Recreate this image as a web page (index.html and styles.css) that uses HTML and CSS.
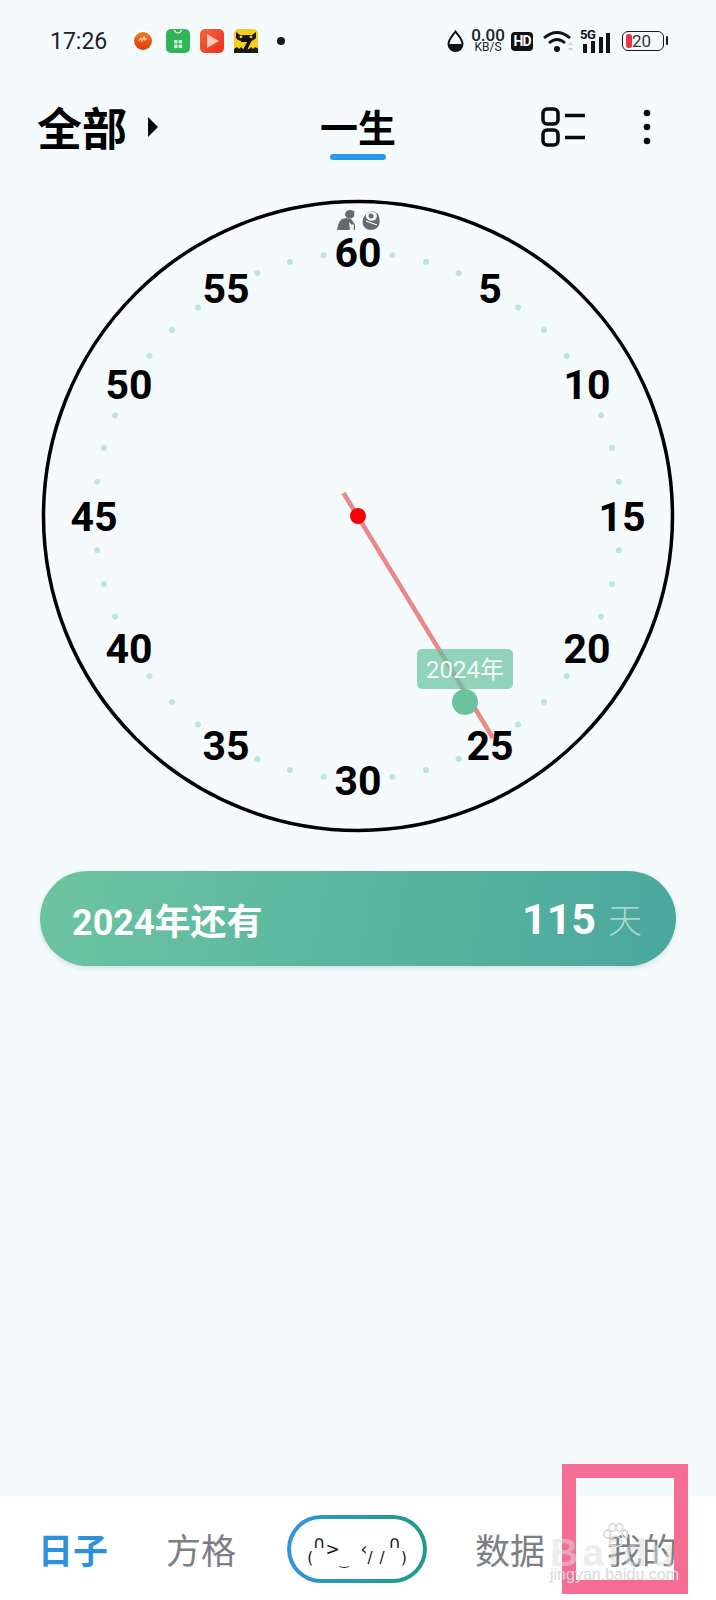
FILE: index.html
```html
<!DOCTYPE html>
<html lang="zh">
<head>
<meta charset="utf-8">
<title>一生</title>
<link rel="stylesheet" href="styles.css">
</head>
<body>
<div class="page">
  <div class="status">
    <span class="time">17:26</span>
    <div class="apps">
      <svg class="app-round" viewBox="0 0 24 24"><defs><linearGradient id="ga" x1="0" y1="0" x2="0" y2="1"><stop offset="0" stop-color="#f07a1c"/><stop offset="1" stop-color="#e5350f"/></linearGradient></defs><circle cx="12" cy="12" r="12" fill="#fff"/><circle cx="12" cy="12" r="9" fill="url(#ga)"/><path d="M8 12l2-3 1 3 2-4 1 3 2-2" fill="none" stroke="#ffd9b0" stroke-width="1.200"/></svg>
      <svg class="app" viewBox="0 0 24 24"><rect width="24" height="24" rx="5" fill="#2fb458"/><path d="M8 1q4 6 8 0" fill="none" stroke="#fff" stroke-width="1.200"/><g fill="#cfeeda"><rect x="8" y="11" width="3.600" height="3.600" rx="1"/><rect x="12.600" y="11" width="3.600" height="3.600" rx="1"/><rect x="8" y="15.600" width="3.600" height="3.600" rx="1"/><rect x="12.600" y="15.600" width="3.600" height="3.600" rx="1"/></g></svg>
      <svg class="app" viewBox="0 0 24 24"><defs><linearGradient id="gb" x1="0" y1="0" x2="1" y2="1"><stop offset="0" stop-color="#f2683c"/><stop offset="1" stop-color="#ee2d1e"/></linearGradient></defs><rect width="24" height="24" rx="5" fill="url(#gb)"/><path d="M7 5l12 7-12 7z" fill="#ffc9b8"/></svg>
      <svg class="app" viewBox="0 0 24 24"><rect width="24" height="24" rx="5" fill="#f7cc1c"/><path d="M2 3l4 3h12l4-3v6q-3 3-5 3H7q-3 0-5-3z" fill="#1b1b1b"/><circle cx="7" cy="8" r="1.400" fill="#f7cc1c"/><circle cx="17" cy="8" r="1.400" fill="#f7cc1c"/><path d="M7 9h12l-6 12h-4l4-8H7z" fill="#111"/><path d="M0 24v-4l3-2 2 2 2-2 2 2h6l2-2 2 2 2-2 4 2v4z" fill="#1b1b1b"/></svg>
      <span class="dot"></span>
    </div>
    <div class="sys">
      <svg class="drop" viewBox="0 0 17 23"><path d="M8.500 1.500C5 6.500 1.500 9.500 1.500 14a7 7 0 0 0 14 0C15.500 9.500 12 6.500 8.500 1.500z" fill="none" stroke="#111" stroke-width="2"/><path d="M1.500 14h14a7 7 0 0 1-14 0z" fill="#111"/></svg>
      <div class="net"><span class="net-v">0.00</span><span class="net-u">KB/S</span></div>
      <span class="hd">HD</span>
      <svg class="wifi" viewBox="0 0 30 23"><g fill="none" stroke="#111" stroke-width="2.800"><path d="M1 8q13-11 26 0"/><path d="M6 13q8-7 16 0"/></g><circle cx="14" cy="19" r="3" fill="#111"/><path d="M25 15l2.500-3 2.500 3zM25 18l2.500 3 2.500-3z" fill="#c9cccd"/></svg>
      <div class="sig">
        <span class="sig-5g">5G</span>
        <svg class="bars" viewBox="0 0 29 20"><g fill="#111"><rect x="2" y="11" width="4" height="9"/><rect x="10" y="8" width="4" height="12"/><rect x="18" y="4" width="4" height="16"/><rect x="25" y="0" width="4" height="20"/></g></svg>
      </div>
      <div class="batt"><span class="batt-fill"></span><span class="batt-num">20</span><span class="batt-nub"></span></div>
    </div>
  </div>

  <header class="head">
    <div class="scope"><span class="scope-t">全部</span><span class="tri"></span></div>
    <div class="tab"><span class="tab-t">一生</span><span class="tab-u"></span></div>
    <div class="tools">
      <svg class="grid-i" viewBox="0 0 44 40"><g fill="none" stroke="#0a0a0a" stroke-width="3.500"><rect x="2" y="2" width="15" height="15" rx="4"/><rect x="2" y="23" width="15" height="15" rx="4"/><path d="M24 8.500h20M24 30.500h20"/></g></svg>
      <svg class="more-i" viewBox="0 0 8 36"><g fill="#0a0a0a"><circle cx="4" cy="4" r="3.300"/><circle cx="4" cy="18" r="3.300"/><circle cx="4" cy="32" r="3.300"/></g></svg>
    </div>
  </header>

  <svg class="clock" viewBox="0 165 716 690">
    <circle cx="358" cy="516" r="314.500" fill="none" stroke="#000" stroke-width="3.500"/>
    <g class="ticks">
      <circle cx="358" cy="253" r="3" transform="rotate(7.500 358 516)"/>
      <circle cx="358" cy="253" r="3" transform="rotate(15 358 516)"/>
      <circle cx="358" cy="253" r="3" transform="rotate(22.500 358 516)"/>
      <circle cx="358" cy="253" r="3" transform="rotate(37.500 358 516)"/>
      <circle cx="358" cy="253" r="3" transform="rotate(45 358 516)"/>
      <circle cx="358" cy="253" r="3" transform="rotate(52.500 358 516)"/>
      <circle cx="358" cy="253" r="3" transform="rotate(67.500 358 516)"/>
      <circle cx="358" cy="253" r="3" transform="rotate(75 358 516)"/>
      <circle cx="358" cy="253" r="3" transform="rotate(82.500 358 516)"/>
      <circle cx="358" cy="253" r="3" transform="rotate(97.500 358 516)"/>
      <circle cx="358" cy="253" r="3" transform="rotate(105 358 516)"/>
      <circle cx="358" cy="253" r="3" transform="rotate(112.500 358 516)"/>
      <circle cx="358" cy="253" r="3" transform="rotate(127.500 358 516)"/>
      <circle cx="358" cy="253" r="3" transform="rotate(135 358 516)"/>
      <circle cx="358" cy="253" r="3" transform="rotate(142.500 358 516)"/>
      <circle cx="358" cy="253" r="3" transform="rotate(157.500 358 516)"/>
      <circle cx="358" cy="253" r="3" transform="rotate(165 358 516)"/>
      <circle cx="358" cy="253" r="3" transform="rotate(172.500 358 516)"/>
      <circle cx="358" cy="253" r="3" transform="rotate(187.500 358 516)"/>
      <circle cx="358" cy="253" r="3" transform="rotate(195 358 516)"/>
      <circle cx="358" cy="253" r="3" transform="rotate(202.500 358 516)"/>
      <circle cx="358" cy="253" r="3" transform="rotate(217.500 358 516)"/>
      <circle cx="358" cy="253" r="3" transform="rotate(225 358 516)"/>
      <circle cx="358" cy="253" r="3" transform="rotate(232.500 358 516)"/>
      <circle cx="358" cy="253" r="3" transform="rotate(247.500 358 516)"/>
      <circle cx="358" cy="253" r="3" transform="rotate(255 358 516)"/>
      <circle cx="358" cy="253" r="3" transform="rotate(262.500 358 516)"/>
      <circle cx="358" cy="253" r="3" transform="rotate(277.500 358 516)"/>
      <circle cx="358" cy="253" r="3" transform="rotate(285 358 516)"/>
      <circle cx="358" cy="253" r="3" transform="rotate(292.500 358 516)"/>
      <circle cx="358" cy="253" r="3" transform="rotate(307.500 358 516)"/>
      <circle cx="358" cy="253" r="3" transform="rotate(315 358 516)"/>
      <circle cx="358" cy="253" r="3" transform="rotate(322.500 358 516)"/>
      <circle cx="358" cy="253" r="3" transform="rotate(337.500 358 516)"/>
      <circle cx="358" cy="253" r="3" transform="rotate(345 358 516)"/>
      <circle cx="358" cy="253" r="3" transform="rotate(352.500 358 516)"/>
    </g>
    <g class="nums">
      <text x="358" y="267">60</text>
      <text x="490" y="303">5</text>
      <text x="587" y="399">10</text>
      <text x="622" y="531">15</text>
      <text x="587" y="663">20</text>
      <text x="490" y="760">25</text>
      <text x="358" y="795">30</text>
      <text x="226" y="760">35</text>
      <text x="129" y="663">40</text>
      <text x="94" y="531">45</text>
      <text x="129" y="399">50</text>
      <text x="226" y="303">55</text>
    </g>
    <g fill="#666a6c">
      <path d="M345 214q1-4 5-4 3 0 5 2l-1 1q1 4-2 5-2 1-4 0-3-1-3-4z"/>
      <path d="M337 230q1-8 5-11l4-1 5 1 3 4-2 2-3-3 1 8z"/>
      <path d="M353 223q2 0 2 2v5h-1.300v-5q0-1-1-1z"/>
      <path d="M365 215q7-7 13-1 4 9-1 14-6 4-12 0-5-6 0-13z"/>
      <path d="M366 214q5-4 10-1 2 4-1 7-5 2-8-1-2-2-1-5z" fill="#f5fbfd"/>
      <circle cx="371" cy="216" r="2.500"/>
      <path d="M366 221l11 4" fill="none" stroke="#f5fbfd" stroke-width="1.300"/>
    </g>
    <line class="hand" x1="343.500" y1="493" x2="493" y2="738"/>
    <circle cx="358" cy="516" r="8" fill="#fb0006"/>
    <rect class="tip" x="417" y="649" width="96" height="40" rx="5"/>
    <text class="tip-t" x="465" y="678">2024年</text>
    <circle cx="465" cy="702" r="13" fill="#6bc2a1"/>
  </svg>

  <div class="banner">
    <span class="banner-l">2024年还有</span>
    <span class="banner-r"><b class="days">115</b><span class="unit">天</span></span>
  </div>

  <nav class="tabs">
    <span class="nav nav-on">日子</span>
    <span class="nav nav-2">方格</span>
    <span class="pill"><span class="pill-in"><span class="lo">(</span><span class="hi">∩</span><span class="mid">&gt;</span><span class="under">‿</span><span class="mid gap">‹</span><span class="lo">/</span><span class="lo gap-s">/</span><span class="hi">∩</span><span class="lo">)</span></span></span>
    <span class="nav nav-3">数据</span>
    <span class="nav">我的</span>
  </nav>

  <div class="mark">
    <svg class="paw" viewBox="0 0 40 40"><g fill="none" stroke="#d6dadb" stroke-width="2.500"><ellipse cx="8" cy="17" rx="5" ry="6"/><ellipse cx="16" cy="7" rx="5" ry="6"/><ellipse cx="27" cy="7" rx="5" ry="6"/><ellipse cx="35" cy="17" rx="4" ry="6"/><path d="M12 34q-2-12 9-14 11 2 9 14-9 4-18 0z"/></g></svg>
    <span class="mark-b">Baidu</span>
    <span class="mark-u">jingyan.baidu.com</span>
  </div>
</div>
</body>
</html>
```

FILE: styles.css
```css
* { box-sizing: border-box; }
html, body { margin: 0; padding: 0; }
body { width: 716px; height: 1600px; overflow: hidden; background: #f5fbfd; font-family: Roboto, "Noto Sans CJK SC", sans-serif; color: #000; }
.page { position: relative; width: 716px; height: 1600px; display: flex; flex-direction: column; }

.status { height: 82px; display: flex; align-items: center; padding: 0 52px 0 50px; }
.time { font-size: 23px; color: #1c2226; width: 81px; }
.apps { display: flex; align-items: center; }
.app-round { width: 24px; height: 24px; margin-right: 11px; }
.app { width: 24px; height: 24px; margin-right: 10px; }
.dot { width: 8px; height: 8px; border-radius: 50%; background: #14191c; margin-left: 9px; }
.sys { margin-left: auto; display: flex; align-items: center; }
.drop { width: 17px; height: 23px; margin-right: 6px; }
.net { display: flex; flex-direction: column; align-items: center; width: 36px; color: #1c2226; }
.net-v { font-size: 17px; line-height: 13px; font-weight: 500; }
.net-u { font-size: 12px; line-height: 11px; }
.hd { width: 22px; height: 19px; margin-left: 5px; border-radius: 4px; background: #111; color: #fff; font: 700 14px/19px Roboto, sans-serif; text-align: center; letter-spacing: -1px; }
.wifi { width: 30px; height: 23px; margin-left: 10px; }
.sig { position: relative; width: 32px; height: 23px; margin-left: 7px; }
.sig-5g { position: absolute; left: 0; top: -1px; font-size: 13px; line-height: 12px; font-weight: 700; letter-spacing: -0.500px; color: #111; }
.bars { position: absolute; left: 1px; top: 3px; width: 29px; height: 20px; }
.batt { position: relative; width: 42px; height: 20px; margin-left: 10px; border: 1.500px solid #1a1a1a; border-radius: 6px; font-size: 17px; line-height: 17px; color: #333; display: flex; align-items: center; padding-left: 3px; }
.batt-fill { width: 6px; height: 14px; border-radius: 2.500px; background: #ee3346; }
.batt-nub { position: absolute; right: -5px; top: 4px; width: 2px; height: 9px; background: #1a1a1a; border-radius: 1px; }

.head { height: 83px; display: grid; grid-template-columns: 1fr auto 1fr; align-items: start; padding: 0 37px; }
.scope { display: flex; align-items: center; height: 90px; font-family: "Noto Sans CJK SC", sans-serif; }
.scope-t { font-size: 45px; font-weight: 700; line-height: 62px; }
.tri { width: 0; height: 0; margin-left: 21px; border-left: 10px solid #0a0a0a; border-top: 10px solid transparent; border-bottom: 10px solid transparent; }
.tab { display: flex; flex-direction: column; align-items: center; font-family: "Noto Sans CJK SC", sans-serif; }
.tab-t { font-size: 38px; font-weight: 700; line-height: 88px; height: 72px; }
.tab-u { width: 56px; height: 6px; border-radius: 3px; background: #2f97ea; }
.tools { display: flex; justify-content: flex-end; align-items: center; gap: 58px; height: 90px; padding-right: 28px; }
.grid-i { width: 44px; height: 40px; }
.more-i { width: 8px; height: 36px; }

.clock { display: block; width: 716px; flex: none; height: 690px; margin-bottom: 16px; }
.ticks circle { fill: #bfe4dd; }
.nums text { font-family: Roboto, sans-serif; font-weight: 700; font-size: 41px; text-anchor: middle; fill: #000; }
.hand { stroke: #e5504e; stroke-opacity: .68; stroke-width: 4.500; }
.tip { fill: #6bc2a1; fill-opacity: .72; }
.tip-t { font-family: Roboto, "Noto Sans CJK SC", sans-serif; font-size: 24px; text-anchor: middle; fill: #fff; fill-opacity: .92; }

.banner { flex: none; width: 636px; height: 95px; margin-left: 40px; border-radius: 48px; padding: 0 34px 0 32px; display: flex; align-items: center; justify-content: space-between; color: #fff; background: linear-gradient(100deg, #6cc4a2, #4aa79c); box-shadow: 0 2px 5px rgba(80, 130, 120, .22); }
.banner-l { font-size: 36px; font-weight: 700; font-family: Roboto, "Noto Sans CJK SC", sans-serif; }
.banner-r { display: flex; align-items: center; }
.days { font-size: 43px; font-weight: 700; }
.unit { font-size: 34px; font-weight: 300; margin-left: 12px; color: rgba(255, 255, 255, .55); font-family: "Noto Sans CJK SC", sans-serif; }

.tabs { margin-top: auto; height: 104px; background: #fff; display: flex; align-items: center; padding: 2px 0 0 38px; font-family: "Noto Sans CJK SC", sans-serif; }
.nav { font-size: 35px; color: #7d8082; line-height: 40px; }
.nav-on { color: #2f90dc; font-weight: 700; }
.nav-2 { margin-left: 58px; }
.nav-3 { margin-left: 48px; margin-right: 62px; }
.pill { width: 140px; height: 68px; margin-left: 51px; padding: 4px; border-radius: 34px; background: linear-gradient(90deg, #3592de, #1e9a88); }
.pill-in { display: flex; align-items: center; justify-content: center; width: 100%; height: 100%; border-radius: 30px; background: #fff; font: 17px/1 "DejaVu Sans", sans-serif; color: #111; white-space: nowrap; }
.hi { transform: translateY(-7px); }
.mid { transform: translateY(0); font-size: 17px; }
.lo { transform: translateY(9px); font-size: 15px; }
.under { transform: translateY(12px); font-size: 11px; }
.gap { margin-left: 12px; }
.gap-s { margin-left: 7px; margin-right: 4px; }

.mark { position: absolute; left: 562px; top: 1464px; width: 126px; height: 130px; border: 14px solid #f56d93; }
.paw { position: absolute; left: 26px; top: 45px; width: 26px; height: 26px; }
.mark-b { position: absolute; left: -26px; top: 53px; font: 700 39px/44px "Liberation Sans", sans-serif; letter-spacing: 4px; color: rgba(215, 220, 222, .5); }
.mark-u { position: absolute; left: -26px; top: 88px; font: 400 16px/18px "Liberation Sans", sans-serif; color: #d6dadb; white-space: nowrap; }
```
